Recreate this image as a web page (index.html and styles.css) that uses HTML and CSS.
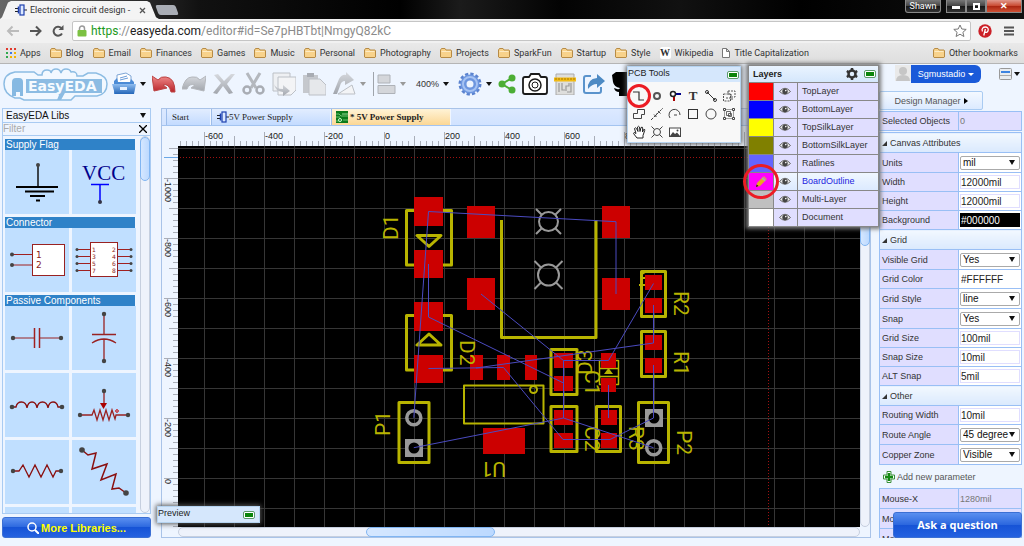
FILE: index.html
```html
<!DOCTYPE html>
<html lang="en">
<head>
    <meta charset="UTF-8">
    <meta name="viewport" content="width=device-width, initial-scale=1.0">
    <title>Electronic circuit design - EasyEDA</title>
    <link rel="stylesheet" href="styles.css">
</head>
<body>
    <svg class="defs" width="0" height="0">
        <defs>
            <linearGradient id="blueFill" x1="0" y1="0" x2="0" y2="1"><stop offset="0" stop-color="#8fbdf0"/><stop offset="1" stop-color="#2466b8"/></linearGradient>
            <linearGradient id="redFill" x1="0" y1="0" x2="0" y2="1"><stop offset="0" stop-color="#f08a8a"/><stop offset="1" stop-color="#b8232a"/></linearGradient>
            <linearGradient id="greyFill" x1="0" y1="0" x2="0" y2="1"><stop offset="0" stop-color="#d6d9de"/><stop offset="1" stop-color="#a2a6ad"/></linearGradient>
            <symbol id="folder" viewBox="0 0 12 10"><path d="M.5 9V2l1-1.500h3.500l1 1.500h5l.5.6V9l-.5.500h-10z" fill="#f8d28b" stroke="#b78b45"/><path d="M1.500 3.500h9" stroke="#fdebc4"/></symbol>
            <symbol id="schematic" viewBox="0 0 12 12"><path d="M0 4.500h4M0 7.500h4M9 6h3" stroke="#222" fill="none"/><path d="M3.500 2.500v7" stroke="#1c3fae" stroke-width="1.500"/><rect x="5" y="1" width="4" height="10" fill="#dce8ff" stroke="#1c3fae" stroke-width="1.200"/></symbol>
            <symbol id="eye" viewBox="0 0 12 9"><path d="M.5 4.500Q6-2 11.500 4.500Q6 10 .5 4.500z" fill="#eee" stroke="#666"/><circle cx="6" cy="4.500" r="2.700" fill="#444"/><circle cx="6.800" cy="3.600" r=".8" fill="#fff"/></symbol>
            <symbol id="led" viewBox="0 0 12 8"><rect x=".5" y=".5" width="11" height="7" rx="1.500" fill="#fff" stroke="#5b9a6b"/><rect x="2" y="2" width="8" height="4" fill="#0c850c"/></symbol>
        </defs>
    </svg>

    <header class="titlebar">
        <div class="browser-tab">
            <svg width="12" height="12"><use href="#schematic"/></svg>
            <span>Electronic circuit design -</span>
            <button class="tab-close" aria-label="Close tab"><svg width="7" height="7" viewBox="0 0 7 7"><path d="M1 1l5 5M6 1l-5 5" stroke="#555" stroke-width="1.300"/></svg></button>
        </div>
        <button class="new-tab" aria-label="New tab"></button>
        <div class="window-controls">
            <button class="profile">Shawn</button>
            <button class="win min" aria-label="Minimize"><i></i></button>
            <button class="win max" aria-label="Maximize"><i></i></button>
            <button class="win close" aria-label="Close">✕</button>
        </div>
    </header>

    <nav class="addressbar">
        <button aria-label="Back"><svg width="14" height="12" viewBox="0 0 14 12"><path d="M13 6H2M6.500 1.500L2 6l4.500 4.500" fill="none" stroke="#bbb" stroke-width="2"/></svg></button>
        <button aria-label="Forward"><svg width="14" height="12" viewBox="0 0 14 12"><path d="M1 6h10M7 1.500L11.500 6 7 10.500" fill="none" stroke="#555" stroke-width="2"/></svg></button>
        <button aria-label="Reload"><svg width="12" height="12" viewBox="0 0 12 12"><path d="M10 8.500A4.500 4.500 0 1 1 9.300 3" fill="none" stroke="#555" stroke-width="2"/><path d="M11.500 0v5h-5z" fill="#555"/></svg></button>
        <div class="url">
            <svg width="10" height="12" viewBox="0 0 10 12"><path d="M2.500 6V3.500a2.500 2.500 0 0 1 5 0V6" fill="none" stroke="#9a9a9a" stroke-width="1.500"/><rect x=".5" y="5" width="9" height="6.500" rx="1" fill="#7cc142"/></svg>
            <span><b>https</b>://<em>easyeda.com</em>/editor#id=Se7pHBTbt|NmgyQ82kC</span>
            <svg class="star" width="14" height="14" viewBox="0 0 14 14"><path d="M7 1l1.800 4 4.400.4-3.300 2.900 1 4.200L7 10.200l-3.900 2.300 1-4.200L.8 5.400l4.400-.4z" fill="#fff" stroke="#777"/></svg>
        </div>
        <svg class="pin" width="14" height="14" viewBox="0 0 14 14"><circle cx="7" cy="7" r="6.700" fill="#cb2027"/><path d="M4.500 7.500C3 4.500 5.500 3 7.300 3c2 0 3.200 1.300 2.900 3.200C9.800 8.500 7.800 9 7 7.800M7.400 5l-1.600 6.500" fill="none" stroke="#fff" stroke-width="1.300"/></svg>
        <button class="menu" aria-label="Menu"><svg width="10" height="10" viewBox="0 0 10 10"><path d="M0 1.500h10M0 5h10M0 8.500h10" stroke="#555" stroke-width="2"/></svg></button>
    </nav>

    <nav class="bookmarks">
        <a href="#"><svg width="10" height="10" viewBox="0 0 10 10"><path d="M0 1h2M4 1h2M8 1h2" stroke="#e0392c" stroke-width="2"/><path d="M0 5h2" stroke="#2ea94e" stroke-width="2"/><path d="M4 5h2" stroke="#3b78e7" stroke-width="2"/><path d="M8 5h2M4 9h2M8 9h2" stroke="#f4b400" stroke-width="2"/><path d="M0 9h2" stroke="#2ea94e" stroke-width="2"/></svg>Apps</a>
        <a href="#"><svg width="12" height="10"><use href="#folder"/></svg>Blog</a>
        <a href="#"><svg width="12" height="10"><use href="#folder"/></svg>Email</a>
        <a href="#"><svg width="12" height="10"><use href="#folder"/></svg>Finances</a>
        <a href="#"><svg width="12" height="10"><use href="#folder"/></svg>Games</a>
        <a href="#"><svg width="12" height="10"><use href="#folder"/></svg>Music</a>
        <a href="#"><svg width="12" height="10"><use href="#folder"/></svg>Personal</a>
        <a href="#"><svg width="12" height="10"><use href="#folder"/></svg>Photography</a>
        <a href="#"><svg width="12" height="10"><use href="#folder"/></svg>Projects</a>
        <a href="#"><svg width="12" height="10"><use href="#folder"/></svg>SparkFun</a>
        <a href="#"><svg width="12" height="10"><use href="#folder"/></svg>Startup</a>
        <a href="#"><svg width="12" height="10"><use href="#folder"/></svg>Style</a>
        <a href="#"><span class="wiki">W</span>Wikipedia</a>
        <a href="#"><svg width="8" height="10" viewBox="0 0 8 10"><path d="M.5.500h4l3 3v6h-7zM4.500.500v3h3" fill="#fff" stroke="#777"/></svg>Title Capitalization</a>
        <a href="#" class="other"><svg width="12" height="10"><use href="#folder"/></svg>Other bookmarks</a>
    </nav>

    <div class="app">
        <div class="main">
            <div class="toolbar">
                <svg class="logo" width="106" height="34" viewBox="0 0 106 34">
                    <path d="M13 5h19l4 3h4q0-5 5-5 4 0 4 3 1-4 5-4t5 4q1-4 5-4t5 3q6-1 6 4h6l5-3h8q11 3 11 11 0 10-10 12H73l-4 4H22l-4-2h-5Q2 27 2 17 2 7 13 5z" fill="#f2f8ff" stroke="#8cbce3" stroke-width="1.500"/>
                    <path d="M10 29V15q0-4 4-4h3q4 0 4 4v14h-3v-4h-4v4z" fill="#86b9e2"/>
                    <path d="M55 24h9l-5 9h-4l2-5z" fill="#8cbce3"/>
                    <rect x="24" y="12" width="76" height="14" fill="#8cbce3"/>
                    <text x="26" y="24">EasyEDA</text>
                </svg>
                <button class="with-caret" aria-label="File"><svg width="24" height="24" viewBox="0 0 24 24"><path d="M5 11V3l9-2 5 3v8z" fill="#fff" stroke="#7fa6d6"/><path d="M8 6l7-2M8 8l8-2" stroke="#6b9bd8"/><path d="M2 9l3-3 1 4h12l1-3 3 3v12H2z" fill="#4b8bd6"/><path d="M0 12h24l-2 10H3z" fill="url(#blueFill)"/><rect x="8" y="15" width="7" height="3" fill="#e8f2ff"/></svg></button>
                <button aria-label="Undo"><svg width="24" height="20" viewBox="0 0 24 20"><path d="M0 2l2 15 13-3-4-3q6-2 8 7h4Q23 4 14 3 9 2 6 6z" fill="url(#redFill)" stroke="#b44"/></svg></button>
                <button aria-label="Redo"><svg width="24" height="20" viewBox="0 0 24 20"><path d="M24 2l-2 15-13-3 4-3q-6-2-8 4H0Q3 3 10 3q5-1 8 3z" fill="url(#greyFill)" stroke="#b4b7bc"/></svg></button>
                <button aria-label="Delete"><svg width="24" height="22" viewBox="0 0 24 22"><path d="M2 2l4-1 6 7 7-7 4 0-8 10 6 9-4 1-6-8-6 8-4-1 8-10z" fill="url(#greyFill)"/></svg></button>
                <button aria-label="Cut"><svg width="24" height="24" viewBox="0 0 24 24"><path d="M5 1l9 15M18 1L9 16" stroke="#b4b8be" stroke-width="3"/><circle cx="5" cy="18" r="3.500" fill="none" stroke="#a9adb4" stroke-width="2.500"/><circle cx="18" cy="18" r="3.500" fill="none" stroke="#a9adb4" stroke-width="2.500"/></svg></button>
                <button aria-label="Copy"><svg width="24" height="24" viewBox="0 0 24 24"><path d="M1 1h17v18H1z" fill="#eef0f3" stroke="#bcc0c6"/><path d="M6 5h18v13l-5 5H6z" fill="#f3f4f6" stroke="#bcc0c6"/><path d="M2 12q2 5 9 5v-4l7 6-7 5v-4Q3 19 2 12z" fill="url(#greyFill)"/></svg></button>
                <button aria-label="Paste"><svg width="24" height="24" viewBox="0 0 24 24"><path d="M1 3h15v18H1z" fill="#c5c8cd"/><path d="M5 1h7v4H5z" fill="#a8acb3"/><path d="M7 7h11l6 6v10H7z" fill="#e6e8eb" stroke="#bcc0c6"/></svg></button>
                <button class="with-caret grey" aria-label="Rotate"><svg width="24" height="24" viewBox="0 0 24 24"><path d="M1 22L7 7q3-5 7-4V0l8 8-9 5v-4q-4 0-5 5L5 22z" fill="url(#greyFill)"/><path d="M6 22l14-9 3 9z" fill="#f3f4f6" stroke="#bcc0c6"/></svg></button>
                <button class="with-caret grey align" aria-label="Align"><svg width="24" height="24" viewBox="0 0 24 24"><path d="M1.500 0v24" stroke="#9fa4ab"/><path d="M6 3h12v8H6zM6 13.500h17v8H6z" fill="#d4d6da" stroke="#aeb2b8"/></svg></button>
                <button class="with-caret zoom">400%</button>
                <button class="with-caret gear" aria-label="Settings"><svg width="24" height="24" viewBox="0 0 24 24"><circle cx="12" cy="12" r="10" fill="none" stroke="#5b83cf" stroke-width="3" stroke-dasharray="3.200 2.036"/><circle cx="12" cy="12" r="6.500" fill="none" stroke="#6d96df" stroke-width="6"/><circle cx="12" cy="12" r="7" fill="none" stroke="#a6c3f3" stroke-width="2"/></svg></button>
                <button aria-label="Share"><svg width="18" height="20" viewBox="0 0 18 20"><path d="M14 4L4 10l10 6" fill="none" stroke="#4cae35" stroke-width="2"/><circle cx="14" cy="4" r="3.500" fill="#4cae35"/><circle cx="4" cy="10" r="3.500" fill="#4cae35"/><circle cx="14" cy="16" r="3.500" fill="#4cae35"/></svg></button>
                <button aria-label="Export image"><svg width="26" height="22" viewBox="0 0 26 22"><path d="M3 4h4l2-3h8l2 3h4q2 0 2 2v13q0 2-2 2H3q-2 0-2-2V6q0-2 2-2z" fill="#fff" stroke="#1a1a1a" stroke-width="1.800"/><circle cx="13" cy="12" r="6" fill="none" stroke="#1a1a1a" stroke-width="1.500"/><circle cx="13" cy="12" r="3" fill="none" stroke="#1a1a1a"/></svg></button>
                <button aria-label="BOM"><svg width="22" height="22" viewBox="0 0 22 22"><path d="M2 1h18v21H2z" fill="#dededc" stroke="#aaa"/><path d="M5 10v9M8 10v7h3M12 18v-5h3v-3M17 10v9h-4" fill="none" stroke="#999" stroke-width="1.200"/><path d="M0 4.500h22v4H0z" fill="#f2bb13"/><path d="M2 5v2M5 5v2M8 5v2M11 5v2M14 5v2M17 5v2M20 5v2" stroke="#a87904"/></svg></button>
                <button aria-label="Export"><svg width="24" height="22" viewBox="0 0 24 22"><path d="M9 3H4Q2 3 2 5v13q0 2 2 2h13q2 0 2-2v-4" fill="none" stroke="#5a93cc" stroke-width="2"/><path d="M6 16Q5 6 15 5V1l8 7-8 7v-4q-5 0-9 5z" fill="#4d8ac4"/></svg></button>
                <button aria-label="Github"><svg width="24" height="24" viewBox="0 0 24 24"><path d="M0 3l4-3h16l4 4v10l-5 5v5H7v-4q-4 0-5-4l3 1q2 1 3-1-6-1-7-6z" fill="#000"/></svg></button>
            </div>

            <div class="workspace">
                <section class="libs">
                    <div class="lib-box">
                        <label class="picker lib-picker"><select aria-label="Library"><option>EasyEDA Libs</option></select></label>
                        <div class="filter"><input type="text" placeholder="Filter" aria-label="Filter"><button aria-label="Clear filter"><svg width="8" height="8" viewBox="0 0 8 8"><path d="M0 0l8 8M8 0L0 8" stroke="#000" stroke-width="1.300"/></svg></button></div>
                        <div class="lib-scroll">
                            <div class="lib-list">
                                <h3>Supply Flag</h3>
                                <div class="tiles">
                                    <div class="tile"><svg viewBox="0 0 64 64"><path d="M33 16v21" stroke="#111" stroke-width="1.500"/><path d="M11 37h42M20 41.500h29M25 46h15M31 50.500h4" stroke="#000" stroke-width="2"/><circle cx="33" cy="15" r="2" fill="#444"/></svg></div>
                                    <div class="tile"><svg viewBox="0 0 64 64"><text x="10" y="30" class="vcc">VCC</text><path d="M19 34.500h18M28 34v18" stroke="#00f" stroke-width="1.500"/><circle cx="28" cy="52" r="2" fill="#334"/></svg></div>
                                </div>
                                <h3>Connector</h3>
                                <div class="tiles">
                                    <div class="tile"><svg viewBox="0 0 64 64"><path d="M7 26.500h21M7 37h21" stroke="#a02020"/><rect x="27.500" y="16.500" width="32" height="31" fill="#fff" stroke="#922"/><circle cx="7" cy="26.500" r="2" fill="#444"/><circle cx="7" cy="37" r="2" fill="#444"/><text x="31" y="30" class="pin-no">1</text><text x="31" y="40" class="pin-no">2</text></svg></div>
                                    <div class="tile"><svg viewBox="0 0 64 64"><path d="M5 21.500h54M5 28.500h54M5 35.500h54M5 42.500h54" stroke="#a02020"/><rect x="18.500" y="14.500" width="27" height="34" fill="#fff" stroke="#922"/><g fill="#444"><circle cx="5" cy="21.500" r="1.500"/><circle cx="5" cy="28.500" r="1.500"/><circle cx="5" cy="35.500" r="1.500"/><circle cx="5" cy="42.500" r="1.500"/><circle cx="59" cy="21.500" r="1.500"/><circle cx="59" cy="28.500" r="1.500"/><circle cx="59" cy="35.500" r="1.500"/><circle cx="59" cy="42.500" r="1.500"/></g><g class="pin-small"><text x="20" y="24">1</text><text x="20" y="31">3</text><text x="20" y="38">5</text><text x="20" y="45">7</text><text x="40" y="24">2</text><text x="40" y="31">4</text><text x="40" y="38">6</text><text x="40" y="45">8</text></g></svg></div>
                                </div>
                                <h3>Passive Components</h3>
                                <div class="tiles">
                                    <div class="tile"><svg viewBox="0 0 64 64"><path d="M8 32h22M34.500 32H56" stroke="#922"/><path d="M29.500 22v20M34.500 22v20" stroke="#a02020" stroke-width="1.500"/><circle cx="8" cy="32" r="2.200" fill="#444"/><circle cx="56" cy="32" r="2.200" fill="#444"/></svg></div>
                                    <div class="tile"><svg viewBox="0 0 64 64"><path d="M32 8v20.500M20 28.500h24M20 37q12-8 24 0M32 33v22" fill="none" stroke="#922" stroke-width="1.300"/><circle cx="32" cy="8" r="2.200" fill="#444"/><circle cx="32" cy="55" r="2.200" fill="#444"/></svg></div>
                                    <div class="tile"><svg viewBox="0 0 64 64"><path d="M7 34h4q1-5 5.500-5t5.500 6q1-6 5-6t5 6q1-6 5.500-6t5.500 6q1-6 5-6t5 5h6" fill="none" stroke="#8a1010" stroke-width="1.300"/><circle cx="7" cy="34" r="2.300" fill="#444"/><circle cx="57" cy="34" r="2.300" fill="#444"/></svg></div>
                                    <div class="tile"><svg viewBox="0 0 64 64"><path d="M8 42h12l2-5 3 10 3-10 3 10 3-10 3 10 3-10 3 9 1-4h12M32 18v14" fill="none" stroke="#922" stroke-width="1.300"/><path d="M28 30h7l-3.500 6z" fill="#a00"/><circle cx="45" cy="38" r="1.300" fill="none" stroke="#c00"/><circle cx="8" cy="42" r="2.200" fill="#444"/><circle cx="56" cy="42" r="2.200" fill="#444"/><circle cx="32" cy="18" r="2.200" fill="#444"/></svg></div>
                                    <div class="tile"><svg viewBox="0 0 64 64"><path d="M8 31h6l4-6 6 12 6-12 6 12 6-12 6 12 3-6h5" fill="none" stroke="#8a1010" stroke-width="1.300"/><circle cx="8" cy="31" r="2.200" fill="#444"/><circle cx="56" cy="31" r="2.200" fill="#444"/></svg></div>
                                    <div class="tile"><svg viewBox="0 0 64 64"><path d="M10 10l6 5 8-2-4 16 15-5-6 16 15-6-4 15 7-1 7 5" fill="none" stroke="#8a1010" stroke-width="1.500"/><circle cx="10" cy="10" r="2.800" fill="#444"/><circle cx="54" cy="53" r="2.800" fill="#444"/></svg></div>
                                    <div class="tile"></div>
                                    <div class="tile"></div>
                                </div>
                            </div>
                            <div class="scroll vertical"><div class="thumb"></div></div>
                        </div>
                    </div>
                    <button class="blue-btn more-libs"><svg width="12" height="12" viewBox="0 0 12 12"><circle cx="5" cy="5" r="4" fill="none" stroke="#fff" stroke-width="1.500"/><path d="M8 8l4 4" stroke="#fff" stroke-width="2"/></svg>More Libraries...</button>
                </section>

                <section class="editor">
                    <div class="doc-tabs">
                        <button class="doc-tab start">Start</button>
                        <button class="doc-tab"><svg width="12" height="12"><use href="#schematic"/></svg>5V Power Supply</button>
                        <button class="doc-tab active"><svg width="12" height="12" viewBox="0 0 12 12"><rect width="12" height="12" fill="#0a7a1a"/><path d="M0 3h3l2 2h7M0 6h4M7 9h5M0 10h3" stroke="#9d9" stroke-width=".7" fill="none"/><circle cx="4" cy="9" r="1.500" fill="none" stroke="#cfc"/><path d="M6 3h6" stroke="#9d9"/></svg>* 5V Power Supply</button>
                    </div>
                    <div class="board-area">
                        <svg class="board">
                            <defs>
                                <pattern id="grid" x="204" y="178" width="30" height="30" patternUnits="userSpaceOnUse"><path d="M.5 0v30M0 .5h30" stroke="#363636"/></pattern>
                                <pattern id="ticksTop" x="204" y="129" width="30" height="17" patternUnits="userSpaceOnUse"><path d="M.5 7v10M6.500 12v5M12.500 12v5M18.500 12v5M24.500 12v5" stroke="#a9aeb8"/></pattern>
                                <pattern id="ticksLeft" x="162" y="178" width="16" height="30" patternUnits="userSpaceOnUse"><path d="M7 .5h9M11 6.500h5M11 12.500h5M11 18.500h5M11 24.500h5" stroke="#a9aeb8"/></pattern>
                            </defs>
                            <g transform="translate(-162 -129)">
                                <rect x="178" y="129" width="100%" height="17" fill="url(#ticksTop)"/>
                                <rect x="162" y="146" width="16" height="100%" fill="url(#ticksLeft)"/>
                                <path d="M204.500 132v14M264.500 132v14M324.500 132v14M384.500 132v14M444.500 132v14M504.500 132v14M564.500 132v14M624.500 132v14M684.500 132v14M744.500 132v14M164 178.500h14M164 238.500h14M164 298.500h14M164 358.500h14M164 418.500h14M164 478.500h14" stroke="#a9aeb8"/>
                                <g class="ruler">
                                    <text x="205" y="139">-600</text><text x="265" y="139">-400</text><text x="325" y="139">-200</text><text x="385" y="139">0</text><text x="445" y="139">200</text><text x="505" y="139">400</text><text x="565" y="139">600</text><text x="625" y="139">800</text>
                                    <text transform="translate(165 179) rotate(90)">-1000</text><text transform="translate(165 239) rotate(90)">-800</text><text transform="translate(165 299) rotate(90)">-600</text><text transform="translate(165 359) rotate(90)">-400</text><text transform="translate(165 419) rotate(90)">-200</text><text transform="translate(165 479) rotate(90)">0</text>
                                </g>
                                <path d="M164 157.500h14" stroke="#6aa7e6"/>
                                <rect x="178" y="146" width="100%" height="100%" fill="#000"/>
                                <rect x="178" y="146" width="100%" height="100%" fill="url(#grid)"/>
                                <path d="M180 157.500h680M768.500 146v390" stroke="#a01010" stroke-dasharray="1 2"/>

                                <g fill="none" stroke="#b8b400" stroke-width="3" stroke-linejoin="round">
                                    <path d="M406.500 210.500h45v54.500h-45zM406.500 315.500h45V370h-45zM417 235.500h24L429 246.500zM417 345h24L429 334z"/>
                                    <path d="M501.500 220v117.500h94.500V220"/>
                                    <rect x="641.500" y="271.500" width="24" height="45"/><rect x="641.500" y="331.500" width="24" height="45"/>
                                    <rect x="399" y="402.500" width="30" height="60"/><rect x="638.500" y="402.500" width="30" height="60"/>
                                    <rect x="551" y="349.500" width="26" height="45"/><rect x="551" y="406.500" width="26" height="45"/>
                                    <rect x="596.500" y="406.500" width="24" height="45"/>
                                    <rect x="464" y="385.500" width="79.500" height="38" stroke-width="2"/><circle cx="533.500" cy="389.500" r="3.500" stroke-width="2"/>
                                    <path d="M599.500 360.500h19v24h-19zM599 368.500h20M599 376.500h20" stroke-width="1.500"/>
                                    <path d="M645 272q-6 3-3 6h4M639 285h8" stroke-width="2"/>
                                </g>
                                <path d="M608.500 368l4.500 6h-9z" fill="#b8b400"/>

                                <g fill="#c00">
                                    <rect x="414" y="197" width="29" height="29"/><rect x="414" y="250" width="29" height="28"/><rect x="414" y="302" width="29" height="29"/><rect x="414" y="355" width="29" height="28"/>
                                    <rect x="467" y="206" width="28" height="32"/><rect x="602" y="206" width="28" height="32"/><rect x="467" y="278" width="28" height="32"/><rect x="602" y="278" width="28" height="32"/>
                                    <rect x="645" y="275" width="17" height="15"/><rect x="645" y="298" width="17" height="15"/><rect x="645" y="335" width="17" height="15"/><rect x="645" y="358" width="17" height="15"/>
                                    <rect x="470" y="355" width="13" height="25"/><rect x="497" y="355" width="13" height="25"/><rect x="525" y="355" width="12" height="25"/><rect x="483" y="428" width="42" height="26"/>
                                    <rect x="554" y="353" width="19" height="15"/><rect x="554" y="376" width="19" height="15"/><rect x="554" y="410" width="19" height="15"/><rect x="554" y="433" width="19" height="15"/>
                                    <rect x="601" y="353" width="15" height="15"/><rect x="601" y="378" width="15" height="14"/><rect x="601" y="410" width="16" height="15"/><rect x="601" y="433" width="16" height="15"/>
                                </g>

                                <g fill="none" stroke="#999" stroke-width="2">
                                    <circle cx="548.500" cy="221.500" r="9.500"/><path d="M536 209l6 6M561 209l-6 6M536 234l6-6M561 234l-6-6"/>
                                    <circle cx="548.500" cy="275" r="10.500"/><path d="M534.500 261l7 7M562.500 261l-7 7M534.500 289l7-7M562.500 289l-7-7"/>
                                    <circle cx="413.800" cy="417.800" r="7" stroke-width="3.500"/><circle cx="653.700" cy="447.700" r="7" stroke-width="3.500"/>
                                </g>
                                <path d="M405 439h18v18h-18zM645 409h18v18h-18z" fill="#999"/>
                                <circle cx="414" cy="448" r="5.500" fill="#000"/><circle cx="654" cy="418" r="5.500" fill="#000"/>

                                <g class="refs">
                                    <text transform="translate(398 240) rotate(-90)">D1</text>
                                    <text transform="translate(390 436) rotate(-90)">P1</text>
                                    <text transform="translate(592 375) rotate(-90)">D3</text>
                                    <text transform="translate(674 291) rotate(90)">R2</text>
                                    <text transform="translate(674 351) rotate(90)">R1</text>
                                    <text transform="translate(460 340) rotate(90)">D2</text>
                                    <text transform="translate(585 370) rotate(90)">C1</text>
                                    <text transform="translate(585 426) rotate(90)">C2</text>
                                    <text transform="translate(629 426) rotate(90)">R3</text>
                                    <text transform="translate(677 430) rotate(90)">P2</text>
                                    <text transform="translate(506 462) rotate(180)">U1</text>
                                </g>

                                <path fill="none" stroke="#4b4bc0" d="M413.800 417.800L428.500 211.500L616 221.700V294M428.500 264v53L563.500 383M481 294l82.500 66.500h45L653.500 283.500M563.500 360.500V418M653.500 305v38L476 368M428.500 368.500L503.500 367.500L563 439.500h47L653.500 418V365M413.800 447.700L563.500 418L653.500 447.700M608.500 385v33"/>
                            </g>
                        </svg>
                        <div class="scroll vertical"><div class="thumb"></div></div>
                    </div>
                    <div class="scroll horizontal"><div class="thumb"></div></div>
                </section>
            </div>
        </div>

        <aside class="props">
            <div class="account">
                <svg width="16" height="16" viewBox="0 0 16 16"><rect width="16" height="16" fill="#e9e9e9"/><circle cx="8" cy="6" r="4" fill="#c6c6c6"/><path d="M1 16q0-6 7-6t7 6z" fill="#c6c6c6"/></svg>
                <button class="user">Sgmustadio</button>
                <button class="view-menu" aria-label="View"><svg width="13" height="12" viewBox="0 0 13 12"><rect x=".5" y=".5" width="12" height="11" rx="1" fill="#e9ecef" stroke="#999"/><path d="M2 4h9" stroke="#3d84e0" stroke-width="2"/><path d="M1 7.500h11" stroke="#aaa"/></svg></button>
            </div>
            <button class="design-manager">Design Manager</button>

            <table class="attrs">
                <colgroup><col class="name-col"><col></colgroup>
                <tr><th>Selected Objects</th><td class="static">0</td></tr>
            </table>
            <table class="attrs canvas-attrs">
                <colgroup><col class="name-col"><col></colgroup>
                <tr class="group"><th colspan="2">Canvas Attributes</th></tr>
                <tr class="tall"><th><label for="units">Units</label></th><td><span class="picker"><select id="units"><option>mil</option></select></span></td></tr>
                <tr><th><label for="width">Width</label></th><td><input id="width" value="12000mil"></td></tr>
                <tr><th><label for="height">Height</label></th><td><input id="height" value="12000mil"></td></tr>
                <tr><th><label for="bg">Background</label></th><td><input id="bg" class="black" value="#000000"></td></tr>
                <tr class="group"><th colspan="2">Grid</th></tr>
                <tr class="tall"><th><label for="vgrid">Visible Grid</label></th><td><span class="picker"><select id="vgrid"><option>Yes</option></select></span></td></tr>
                <tr><th><label for="gcolor">Grid Color</label></th><td><input id="gcolor" class="plain" value="#FFFFFF"></td></tr>
                <tr class="tall"><th><label for="gstyle">Grid Style</label></th><td><span class="picker"><select id="gstyle"><option>line</option></select></span></td></tr>
                <tr class="tall"><th><label for="snap">Snap</label></th><td><span class="picker"><select id="snap"><option>Yes</option></select></span></td></tr>
                <tr><th><label for="gsize">Grid Size</label></th><td><input id="gsize" value="100mil"></td></tr>
                <tr><th><label for="ssize">Snap Size</label></th><td><input id="ssize" value="10mil"></td></tr>
                <tr><th><label for="alt">ALT Snap</label></th><td><input id="alt" value="5mil"></td></tr>
                <tr class="group"><th colspan="2">Other</th></tr>
                <tr><th><label for="rwidth">Routing Width</label></th><td><input id="rwidth" value="10mil"></td></tr>
                <tr class="tall"><th><label for="angle">Route Angle</label></th><td><span class="picker"><select id="angle"><option>45 degree</option></select></span></td></tr>
                <tr class="tall"><th><label for="copper">Copper Zone</label></th><td><span class="picker"><select id="copper"><option>Visible</option></select></span></td></tr>
            </table>
            <button class="add-param"><svg width="12" height="12" viewBox="0 0 12 12"><path d="M4 .5h4V4h3.500v4H8v3.500H4V8H.5V4H4z" fill="#fff" stroke="#3a8f3a"/><path d="M6 2v8M2 6h8" stroke="#128a12" stroke-width="2.500"/></svg>Add new parameter</button>
            <table class="attrs">
                <colgroup><col class="name-col"><col></colgroup>
                <tr class="tall"><th>Mouse-X</th><td class="static">1280mil</td></tr>
                <tr class="tall"><th>Mouse-Y</th><td class="static"></td></tr>
                <tr class="tall"><th>Mouse-DX</th><td class="static"></td></tr>
            </table>
        </aside>
    </div>

    <div class="float-panel pcb-tools">
        <div class="float-head"><span>PCB Tools</span><svg width="12" height="8"><use href="#led"/></svg></div>
        <div class="tool-grid">
            <button class="marked" aria-label="Track"><svg viewBox="0 0 14 14"><path d="M1 3h6v8h5" fill="none" stroke="#333" stroke-width="1.200"/></svg></button>
            <button aria-label="Pad"><svg viewBox="0 0 14 14"><circle cx="7" cy="7" r="3" fill="none" stroke="#555" stroke-width="2"/></svg></button>
            <button aria-label="Via"><svg viewBox="0 0 14 14"><path d="M7 5h6" stroke="#008" stroke-width="2"/><path d="M6 6v6" stroke="#a00" stroke-width="2"/><circle cx="5" cy="5" r="2.500" fill="#fff" stroke="#222" stroke-width="1.500"/></svg></button>
            <button class="text-tool" aria-label="Text">T</button>
            <button aria-label="Dimension"><svg viewBox="0 0 14 14"><path d="M3 3l8 8" stroke="#333"/><circle cx="3" cy="3" r="1.500" fill="none" stroke="#333"/><circle cx="11" cy="11" r="1.500" fill="none" stroke="#333"/></svg></button>
            <button aria-label="Copper area"><svg viewBox="0 0 14 14"><path d="M6 2h7v6H9V5H6zM1.500 5h7v7h-7zM4 9h6v3" fill="none" stroke="#555" stroke-dasharray="2 1"/></svg></button>
            <button aria-label="Solid region"><svg viewBox="0 0 14 14"><path d="M1.500 6.500h4v-4h7v5h-3v4h-8z" fill="none" stroke="#444"/></svg></button>
            <button aria-label="Measure"><svg viewBox="0 0 14 14"><path d="M1 13L13 1" stroke="#444" stroke-dasharray="3 1"/><path d="M4 7.500l2.500 2.500M8 4l2.500 2.500M7.500 6L5 9.500" stroke="#444"/></svg></button>
            <button aria-label="Arc"><svg viewBox="0 0 14 14"><path d="M2 11A5.500 5.500 0 1 1 12 8M6 8h3" fill="none" stroke="#444"/></svg></button>
            <button aria-label="Rectangle"><svg viewBox="0 0 14 14"><rect x="2.500" y="2.500" width="9" height="9" fill="none" stroke="#333"/></svg></button>
            <button aria-label="Circle"><svg viewBox="0 0 14 14"><circle cx="7" cy="7" r="5" fill="none" stroke="#444"/></svg></button>
            <button aria-label="Group"><svg viewBox="0 0 14 14"><path d="M2.500 3v8M11.500 3v8M3 2.500h8M3 11.500h8" fill="none" stroke="#888" stroke-width=".8"/><path d="M4.500 4.500h4v4h-4zM6.500 6.500h3v3h-3z" fill="none" stroke="#444" stroke-width=".8"/><path d="M1.500 1.500h2v2h-2zM10.500 1.500h2v2h-2zM1.500 10.500h2v2h-2zM10.500 10.500h2v2h-2z" fill="#fff" stroke="#444"/></svg></button>
            <button aria-label="Pan"><svg viewBox="0 0 14 14"><path d="M5 13L1.500 8.500q0-2 2.500 0L2.500 3.500q1.500-1.500 2 0L6 6.500 5.500 2q1-1.500 2 0L8 6.500 9 2.500q1.500-1 1.700.5L10.500 7l1.200-2.500q1.500-.5 1 1L11 10.500V13z" fill="#fff" stroke="#222"/></svg></button>
            <button aria-label="Hole"><svg viewBox="0 0 14 14"><circle cx="7" cy="7" r="3.500" fill="none" stroke="#444"/><path d="M1.500 1.500l3 3M12.500 1.500l-3 3M1.500 12.500l3-3M12.500 12.500l-3-3" stroke="#444"/></svg></button>
            <button aria-label="Image"><svg viewBox="0 0 14 14"><rect x="1.500" y="3" width="11" height="8.500" fill="#fff" stroke="#444"/><path d="M2 11l3-4 2 2 2-1.500 3 3.500z" fill="#444"/><circle cx="9.500" cy="5.500" r="1" fill="#444"/></svg></button>
        </div>
    </div>

    <div class="float-panel layers">
        <div class="float-head"><b>Layers</b><svg class="cog" width="12" height="12" viewBox="0 0 12 12"><circle cx="6" cy="6" r="3.500" fill="none" stroke="#333" stroke-width="2.500"/><path d="M6 0v2.500M6 9.500V12M.8 3L3 4.300M9 7.700L11.200 9M.8 9L3 7.700M9 4.300L11.200 3" stroke="#333" stroke-width="2.500"/></svg><svg width="12" height="8"><use href="#led"/></svg></div>
        <ul>
            <li><i class="swatch top"></i><svg width="12" height="9"><use href="#eye"/></svg><span>TopLayer</span></li>
            <li><i class="swatch bottom"></i><svg width="12" height="9"><use href="#eye"/></svg><span>BottomLayer</span></li>
            <li><i class="swatch top-silk"></i><svg width="12" height="9"><use href="#eye"/></svg><span>TopSilkLayer</span></li>
            <li><i class="swatch bottom-silk"></i><svg width="12" height="9"><use href="#eye"/></svg><span>BottomSilkLayer</span></li>
            <li><i class="swatch ratlines"></i><svg width="12" height="9"><use href="#eye"/></svg><span>Ratlines</span></li>
            <li class="current"><i class="swatch outline"><svg width="12" height="12" viewBox="0 0 12 12"><path d="M1 11l1-4 6-6 3 3-6 6z" fill="#eda521"/><path d="M8 1l3 3-1.500 1.500-3-3z" fill="#aaa"/><path d="M9 0l3 3-1 1-3-3z" fill="#e77"/><path d="M1 11l.6-2.500L3.500 10z" fill="#111"/></svg></i><svg width="12" height="9"><use href="#eye"/></svg><span>BoardOutline</span></li>
            <li><i class="swatch multi"></i><svg width="12" height="9"><use href="#eye"/></svg><span>Multi-Layer</span></li>
            <li><i class="swatch document"></i><svg width="12" height="9"><use href="#eye"/></svg><span>Document</span></li>
        </ul>
    </div>

    <div class="float-panel preview"><div class="float-head"><span>Preview</span><svg width="12" height="8"><use href="#led"/></svg></div></div>
    <button class="blue-btn ask">Ask a question</button>
</body>
</html>
```
FILE: styles.css
```css
:root {
    --line: #99bff5;
    --lilac: #e0deff;
    --page: #eef5ff;
    --sans: "Liberation Sans", Arial, sans-serif;
    --ui: "Open Sans", "Segoe UI", sans-serif;
    --chrome: Roboto, "Segoe UI", sans-serif;
}

* {
    box-sizing: border-box;
}

body {
    margin: 0;
    height: 100vh;
    display: flex;
    flex-direction: column;
    position: relative;
    overflow: hidden;
    background: var(--page);
    color: #333;
    font: 9px/12px var(--sans);
}

button {
    border: none;
    background: none;
    padding: 0;
    margin: 0;
    color: inherit;
    font: inherit;
}

svg {
    display: block;
    flex: none;
}

.defs {
    position: absolute;
}

/* Browser window */
.titlebar {
    flex: none;
    height: 19px;
    display: flex;
    background: linear-gradient(90deg, #666 0, #111 200px, #000 400px, #1b1b1b 460px, #030303 560px, #111 680px, #000 800px, #111 100%);
    font-family: var(--chrome);
}

.browser-tab {
    width: 159px;
    margin-top: 1px;
    padding-left: 15px;
    display: flex;
    align-items: center;
    background: #f4f4f4;
    clip-path: polygon(0 100%, 2px 90%, 8px 8%, 11px 0, 147px 0, 150px 8%, 156px 90%, 159px 100%);
}

.browser-tab span {
    flex: 1;
    padding-left: 3px;
    white-space: nowrap;
}

.tab-close {
    margin-right: 13px;
}

.new-tab {
    width: 20px;
    height: 10px;
    margin: 5px 0 0 -2px;
    background: #a9adb5;
    border-radius: 2px;
    transform: skewX(20deg);
}

.window-controls {
    margin-left: auto;
    display: flex;
    align-items: flex-start;
    padding-right: 2px;
    color: #fff;
}

.window-controls button {
    height: 13px;
    background: linear-gradient(#777, #444 50%, #151515 50%, #333);
    border: 1px solid #8a8a8a;
    border-top: none;
    line-height: 12px;
    text-align: center;
}

.window-controls .profile {
    width: 36px;
    margin-right: 5px;
    border-radius: 0 0 3px 3px;
}

.win {
    width: 20px;
    display: flex;
    justify-content: center;
    align-items: center;
}

.win.min i {
    width: 8px;
    height: 3px;
    margin-top: 3px;
    background: #fff;
}

.win.max i {
    width: 7px;
    height: 7px;
    border: 2px solid #fff;
}

.window-controls .close {
    width: 36px;
    background: linear-gradient(#e0988c, #c9482f 50%, #a82410 50%, #cf5034);
    font-weight: 700;
}

.addressbar {
    flex: none;
    height: 24px;
    display: flex;
    align-items: center;
    gap: 9px;
    padding: 0 10px 0 6px;
    background: #f1f1f1;
}

.url {
    flex: 1;
    height: 20px;
    margin-left: -1px;
    padding: 0 3px 0 4px;
    display: flex;
    align-items: center;
    background: #fff;
    border: 1px solid #c5c5c5;
    border-radius: 2px;
    color: #8a8a8a;
    font: 12px/18px var(--chrome);
}

.url span {
    flex: 1;
    padding-left: 4px;
}

.url b {
    color: #1c9a1c;
    font-weight: 400;
}

.url em {
    color: #222;
    font-style: normal;
}

.addressbar .pin {
    margin-left: -2px;
}

.addressbar .menu {
    margin-left: 3px;
}

.bookmarks {
    flex: none;
    height: 21px;
    display: flex;
    align-items: center;
    gap: 9px;
    padding: 0 6px;
    background: linear-gradient(#e9e9e9, #dedede);
    border-bottom: 1px solid #b5b5b5;
    font-family: var(--chrome);
}

.bookmarks a {
    display: flex;
    align-items: center;
    gap: 4px;
    color: #333;
    text-decoration: none;
    white-space: nowrap;
}

.bookmarks .other {
    margin-left: auto;
}

.wiki {
    width: 11px;
    background: #fff;
    border-radius: 2px;
    text-align: center;
    font: 700 10px/12px "Liberation Serif", serif;
}

/* Application */
.app {
    flex: 1;
    min-height: 0;
    display: flex;
    gap: 8px;
    padding: 0 2px 8px;
}

.main {
    flex: 1;
    min-width: 0;
    display: flex;
    flex-direction: column;
}

.toolbar {
    flex: none;
    height: 44px;
    display: flex;
    align-items: center;
    gap: 6px;
    padding-bottom: 4px;
    overflow: hidden;
}

.logo {
    margin-right: -2px;
}

.logo text {
    font: 700 14px "DejaVu Sans", sans-serif;
    fill: #f6fbff;
}

.with-caret {
    display: flex;
    align-items: center;
    gap: 4px;
}

.with-caret::after,
.view-menu::after {
    content: "";
    border: 3px solid transparent;
    border-top: 4px solid #111;
    border-bottom: none;
}

.with-caret.grey::after {
    border-top-color: #999;
}

.toolbar .align {
    margin-right: 4px;
}

.toolbar .gear {
    margin-left: 3px;
}

.workspace {
    flex: 1;
    min-height: 0;
    display: flex;
    gap: 10px;
}

.libs {
    width: 149px;
    display: flex;
    flex-direction: column;
    gap: 3px;
}

.lib-box {
    flex: 1;
    min-height: 0;
    display: flex;
    flex-direction: column;
    border: 1px solid #a9cbf2;
}

.picker {
    display: flex;
    align-items: center;
    background: #fff;
    color: #000;
}

.picker select {
    flex: 1;
    min-width: 0;
    appearance: none;
    border: none;
    background: none;
    padding: 0;
    font: 10px/13px var(--sans);
    color: #111;
    outline: none;
}

.picker::after {
    content: "";
    border: 3px solid transparent;
    border-top: 5px solid #111;
    border-bottom: none;
    margin: 0 4px 0 2px;
}

.lib-picker {
    height: 13px;
    padding-left: 3px;
    background: var(--page);
}

.filter {
    display: flex;
    align-items: center;
    height: 14px;
    border-top: 1px solid #a9cbf2;
    border-bottom: 1px solid #a9cbf2;
}

.filter input {
    flex: 1;
    min-width: 0;
    border: none;
    background: none;
    padding: 0;
    font: 10px/12px var(--sans);
}

.filter input::placeholder {
    color: #aaa;
}

.filter button {
    margin-right: 3px;
}

.lib-scroll {
    flex: 1;
    min-height: 0;
    display: flex;
    justify-content: space-between;
}

.lib-list {
    width: 133px;
    padding: 3px 0 0 2px;
    overflow: hidden;
}

.lib-list h3 {
    margin: 0 1px 0 0;
    padding-left: 1px;
    background: #2f82c8;
    color: #fff;
    font: 10px/11px var(--sans);
}

.tiles {
    display: grid;
    grid-template-columns: 64px 64px;
    gap: 3px;
    margin-bottom: 3px;
}

.tile {
    height: 64px;
    background: #c0dfff;
}

.vcc {
    font: 21px "Liberation Serif", serif;
    fill: #00008b;
}

.pin-no {
    font: 9px "DejaVu Sans", sans-serif;
    fill: #8b1a1a;
}

.pin-small {
    font: 6px "DejaVu Sans", sans-serif;
    fill: #8b1a1a;
}

.scroll {
    background: #eef2fb;
    border: 1px solid #c6cfdf;
    border-radius: 5px;
}

.scroll .thumb {
    background: linear-gradient(90deg, #d5e7ff, #bcd9ff);
    border: 1px solid #80b5f2;
    border-radius: 5px;
}

.scroll.vertical {
    flex: none;
    width: 10px;
}

.scroll.vertical .thumb {
    width: 10px;
    height: 44px;
    margin-left: -1px;
}

.board-area .scroll.vertical .thumb {
    height: 96px;
    margin-top: 20px;
}

.scroll.horizontal {
    flex: none;
    height: 10px;
    margin: 0 10px 0 16px;
}

.scroll.horizontal .thumb {
    width: 19%;
    height: 10px;
    margin: -1px 0 0 187px;
}

.blue-btn {
    display: flex;
    align-items: center;
    justify-content: center;
    gap: 2px;
    background: linear-gradient(#5a8ff0, #2a66de 50%, #1653d6 50%, #2461e0);
    border: 1px solid #3b6fd4;
    border-radius: 3px;
}

.more-libs {
    height: 21px;
    color: #ff0;
    font: 700 11px/14px var(--sans);
}

.editor {
    flex: 1;
    min-width: 0;
    display: flex;
    flex-direction: column;
    border: 1px solid #a9c3e8;
}

.doc-tabs {
    flex: none;
    height: 20px;
    display: flex;
    align-items: flex-start;
    padding-left: 4px;
    background: linear-gradient(#dce9ff, #d0e2ff);
    border-bottom: 3px solid var(--page);
    box-shadow: inset 0 -1px #a3c4f0;
}

.doc-tab {
    height: 16px;
    display: flex;
    align-items: center;
    width: 120px;
    padding-left: 5px;
    background: linear-gradient(#e2edff, #c3dbff);
    border-left: 1px solid #9dbdea;
    border-right: 1px solid #f0f6ff;
    font: 9px/14px "Liberation Serif", serif;
    color: #222;
}

.doc-tab.start {
    width: 45px;
}

.doc-tab.active {
    gap: 2px;
    padding-left: 4px;
    background: linear-gradient(#fff3d6, #fbd795);
    font-weight: 700;
}

.board-area {
    flex: 1;
    min-height: 0;
    display: flex;
}

.board {
    flex: 1;
    height: 100%;
    min-width: 0;
    background: var(--page);
}

.ruler {
    font: 9px var(--sans);
    fill: #222;
}

.refs {
    font: 21px Roboto, sans-serif;
    fill: #b8b400;
}

/* Attributes column */
.props {
    flex: none;
    width: 143px;
    display: flex;
    flex-direction: column;
    overflow: hidden;
}

.account {
    display: flex;
    height: 18px;
    margin: 1px 0 8px 16px;
}

.user {
    width: 70px;
    height: 18px;
    display: flex;
    align-items: center;
    justify-content: center;
    gap: 3px;
    background: #1a5ad9;
    border-radius: 0 6px 6px 0;
    color: #fff;
}

.user::after {
    content: "";
    border: 3px solid transparent;
    border-top-color: #fff;
    border-bottom: none;
}

.view-menu {
    margin-left: auto;
    margin-right: 2px;
    display: flex;
    align-items: center;
    gap: 2px;
}

.design-manager {
    flex: none;
    width: 104px;
    height: 19px;
    margin-bottom: 1px;
    display: flex;
    align-items: center;
    justify-content: center;
    gap: 3px;
    background: linear-gradient(#f4f9ff, #dceaff);
    border: 1px solid #a9cbf2;
    border-radius: 2px;
    color: #555;
}

.design-manager::after {
    content: "";
    border: 3px solid transparent;
    border-left: 4px solid #000;
    border-right: none;
}

.attrs {
    width: 100%;
    border-collapse: collapse;
    table-layout: fixed;
}

.name-col {
    width: 79px;
}

.attrs tr {
    height: 19px;
}

.attrs tr.tall,
.attrs tr.group {
    height: 20px;
}

.attrs th,
.attrs td {
    border: 1px solid var(--line);
    padding: 0 1px;
    text-align: left;
    font-weight: 400;
}

.attrs th {
    padding-left: 2px;
    background: var(--lilac);
}

.attrs td {
    background: #fff;
}

.attrs td.static {
    background: var(--lilac);
    color: #777;
}

.attrs .group th {
    background: linear-gradient(#f2f8ff, #dae9fd);
}

.attrs .group th::before {
    content: "";
    display: inline-block;
    margin-right: 3px;
    border-left: 5px solid transparent;
    border-bottom: 5px solid #333;
}

.canvas-attrs {
    margin-top: 1px;
}

.attrs input {
    display: block;
    width: 100%;
    height: 14px;
    padding: 0;
    border: 1px solid #e0deff;
    font: 10px/12px var(--sans);
    color: #222;
}

.attrs input.black {
    background: #000;
    border-color: #000;
    color: #fff;
}

.attrs input.plain {
    border-color: #fff;
}

.attrs .picker {
    height: 14px;
    padding-left: 2px;
    border: 1px solid #aaa;
    border-radius: 2px;
}

.attrs .picker::after {
    margin-left: 0;
}

.add-param {
    flex: none;
    height: 23px;
    display: flex;
    align-items: center;
    gap: 2px;
    padding-left: 4px;
    color: #555;
}

/* Floating windows */
.float-panel {
    position: absolute;
    background: #f8f8f8;
    border: 1px solid #b5d3f0;
    box-shadow: 0 0 5px 1px #555;
}

.float-head {
    display: flex;
    justify-content: space-between;
    height: 15px;
    background: #d5e7fc;
    color: #222;
}

.float-head svg {
    margin-top: 4px;
}

.pcb-tools {
    top: 66px;
    right: 283px;
    width: 114px;
    height: 77px;
}

.pcb-tools .float-head {
    padding-right: 1px;
}

.tool-grid {
    display: grid;
    grid-template-columns: repeat(6, 18px);
    grid-auto-rows: 18px;
    padding: 5px 1px 0 2px;
}

.tool-grid button {
    display: flex;
    justify-content: center;
    align-items: center;
}

.tool-grid svg {
    width: 14px;
    height: 14px;
}

.tool-grid .text-tool {
    font: 700 13px/18px "Liberation Serif", serif;
}

/* Red highlight rings */
.marked,
.swatch.outline {
    position: relative;
}

.marked::after,
.swatch.outline::after {
    content: "";
    position: absolute;
    border: 3px solid #ec1c24;
    border-radius: 50%;
}

.marked::after {
    inset: -3px;
}

.swatch.outline::after {
    inset: -9px -6px;
}

.layers {
    top: 65px;
    right: 145px;
    width: 131px;
    border: 1px solid #888;
    box-shadow: 0 0 4px 2px #777;
}

.layers .float-head {
    height: 16px;
    padding: 2px 2px 0 4px;
    background: linear-gradient(#eaf4ff, #d5e7fc);
}

.layers .float-head b {
    flex: 1;
}

.layers .float-head svg {
    margin: 2px 0 0 6px;
}

.layers .float-head .cog {
    margin-top: 0;
}

.layers ul {
    margin: 0;
    padding: 0;
    list-style: none;
}

.layers li {
    height: 18px;
    display: flex;
    align-items: center;
    border-top: 1px solid #888;
    background: var(--lilac);
}

.layers li > svg {
    margin: 0 6px 0 5px;
}

.layers li span {
    align-self: stretch;
    padding-left: 4px;
    border-left: 1px solid #888;
    line-height: 16px;
}

.layers li.current {
    background: linear-gradient(#f0f7ff, #dceaff);
    color: #2323e0;
}

.swatch {
    width: 25px;
    height: 17px;
    border-right: 1px solid #888;
    display: flex;
    align-items: center;
    justify-content: center;
}

.top { background: #f00; }
.bottom { background: #00f; }
.top-silk { background: #ff0; }
.bottom-silk { background: #808000; }
.ratlines { background: #6464ff; }
.outline { background: #f0f; }
.multi { background: #c0c0c0; }
.document { background: #fff; }

.preview {
    left: 157px;
    bottom: 23px;
    width: 103px;
}

.preview .float-head {
    padding-right: 4px;
}

.ask {
    position: absolute;
    right: 2px;
    bottom: 8px;
    width: 129px;
    height: 26px;
    color: #fff;
    font: 700 11px/14px var(--ui);
}
```
